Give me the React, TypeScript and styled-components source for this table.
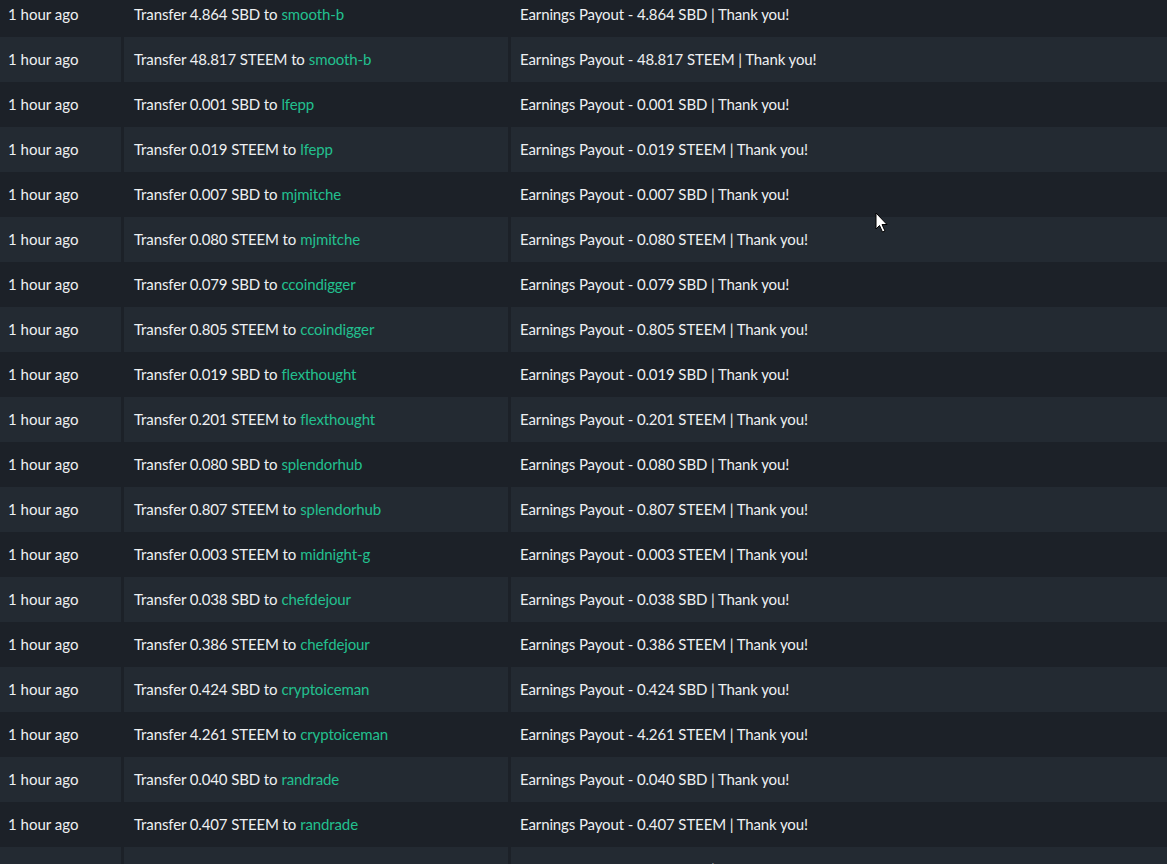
import styled, {createGlobalStyle} from 'styled-components';

const GlobalStyle = createGlobalStyle`
    html, body {
        margin: 0;
        padding: 0;
        background: #1c2128;
        overflow: hidden;
    }
`;

const Page = styled.div`
    position: relative;
    width: 1167px;
    height: 864px;
    overflow: hidden;
    background: #1c2128;
    font-family: Lato, "Noto Sans", sans-serif;
    font-size: 15px;
    color: #eef0f2;
`;

const Table = styled.div`
    display: flex;
    flex-direction: column;
    margin-top: -8px;
`;

const Row = styled.div`
    display: grid;
    grid-template-columns: 121px 384px 1fr;
    column-gap: 3px;
    height: 45px;
`;

const Cell = styled.div<{$striped: boolean}>`
    display: flex;
    align-items: center;
    padding: 0 10px 2px;
    white-space: nowrap;
    letter-spacing: -0.12px;
    background: ${p => (p.$striped ? '#232a32' : '#1c2128')};

    &:first-child {
        padding-left: 8px;
        letter-spacing: 0;
    }

    &:last-child {
        padding-left: 9px;
    }
`;

const Account = styled.a`
    color: #22c08f;
    text-decoration: none;
    margin-left: 0.27em;
`;

const Cursor = styled.svg`
    position: absolute;
    left: 875px;
    top: 212px;
`;

type Transfer = {amount: string; asset: 'SBD' | 'STEEM'; to: string};

const transfers: Transfer[] = [
    {amount: '4.864', asset: 'SBD', to: 'smooth-b'},
    {amount: '48.817', asset: 'STEEM', to: 'smooth-b'},
    {amount: '0.001', asset: 'SBD', to: 'lfepp'},
    {amount: '0.019', asset: 'STEEM', to: 'lfepp'},
    {amount: '0.007', asset: 'SBD', to: 'mjmitche'},
    {amount: '0.080', asset: 'STEEM', to: 'mjmitche'},
    {amount: '0.079', asset: 'SBD', to: 'ccoindigger'},
    {amount: '0.805', asset: 'STEEM', to: 'ccoindigger'},
    {amount: '0.019', asset: 'SBD', to: 'flexthought'},
    {amount: '0.201', asset: 'STEEM', to: 'flexthought'},
    {amount: '0.080', asset: 'SBD', to: 'splendorhub'},
    {amount: '0.807', asset: 'STEEM', to: 'splendorhub'},
    {amount: '0.003', asset: 'STEEM', to: 'midnight-g'},
    {amount: '0.038', asset: 'SBD', to: 'chefdejour'},
    {amount: '0.386', asset: 'STEEM', to: 'chefdejour'},
    {amount: '0.424', asset: 'SBD', to: 'cryptoiceman'},
    {amount: '4.261', asset: 'STEEM', to: 'cryptoiceman'},
    {amount: '0.040', asset: 'SBD', to: 'randrade'},
    {amount: '0.407', asset: 'STEEM', to: 'randrade'},
    {amount: '0.102', asset: 'SBD', to: 'kingscrown'},
];

export default function App() {
    return (
        <Page>
            <GlobalStyle />
            <Table>
                {transfers.map((t, i) => {
                    const striped = i % 2 === 1;
                    return (
                        <Row key={i}>
                            <Cell $striped={striped}>1 hour ago</Cell>
                            <Cell $striped={striped}>
                                Transfer {t.amount} {t.asset} to
                                <Account href="#">{t.to}</Account>
                            </Cell>
                            <Cell $striped={striped}>
                                Earnings Payout - {t.amount} {t.asset} | Thank you!
                            </Cell>
                        </Row>
                    );
                })}
            </Table>
            <Cursor width="14" height="22" viewBox="0 0 14 22">
                <path
                    d="M1 1 L1 17 L4.5 13.5 L7.5 20 L10 19 L7 12.5 L12 12.5 Z"
                    fill="#ffffff"
                    stroke="#000000"
                    strokeWidth="1"
                    strokeLinejoin="miter"
                />
            </Cursor>
        </Page>
    );
}
